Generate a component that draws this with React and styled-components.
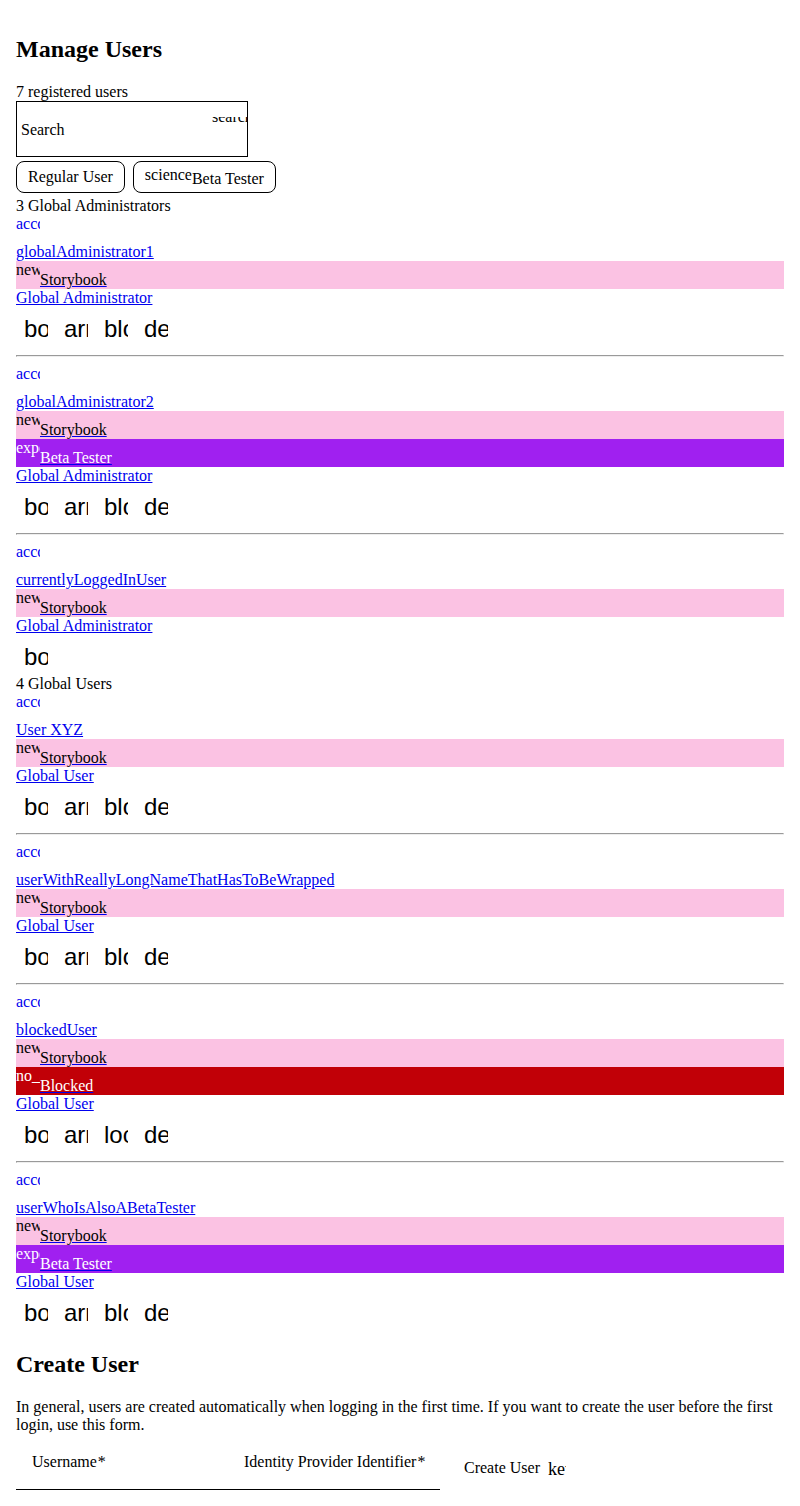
import React from "react";
import styled, { createGlobalStyle } from "styled-components";

const GlobalStyle = createGlobalStyle`
  body {
    margin: 0;
    padding: 16px;
    background: #fff;
    color: #000;
    font-family: "Liberation Serif", "Times New Roman", serif;
    font-size: 16px;
  }
`;

const Heading = styled.h2`
  margin: 20px 0;
  font-size: 24px;
  line-height: 27px;
`;

const Intro = styled.p`
  margin: 0;
`;

const SearchBox = styled.div`
  box-sizing: border-box;
  display: flex;
  width: 232px;
  max-width: 100%;
  height: 56px;
  border: 1px solid #000;
`;

const SearchInput = styled.input`
  flex: 1;
  min-width: 0;
  padding: 2px 4px 0;
  border: 0;
  outline: 0;
  background: transparent;
  color: inherit;
  font: inherit;

  &::placeholder {
    color: #000;
    opacity: 1;
  }
`;

const SearchIcon = styled.span`
  width: 35px;
  height: 24px;
  margin-top: 15px;
  overflow: hidden;
  line-height: 0;
`;

const Chips = styled.div`
  display: flex;
  flex-wrap: wrap;
  gap: 8px;
  margin: 4px 0;
`;

const Chip = styled.button`
  box-sizing: border-box;
  display: flex;
  align-items: center;
  height: 32px;
  padding: 0 11px;
  border: 1px solid #000;
  border-radius: 8px;
  background: transparent;
  color: inherit;
  font: inherit;
  cursor: pointer;
`;

const ChipIcon = styled.span`
  align-self: flex-start;
  padding-top: 4px;
`;

const ChipLabel = styled.span`
  align-self: flex-end;
  padding-bottom: 4px;
`;

const Icon = styled.span`
  display: inline-block;
  width: ${(p) => p.$size || 24}px;
  height: ${(p) => p.$size || 24}px;
  overflow: hidden;
  white-space: nowrap;
`;

const UserLink = styled.a`
  display: block;
  color: #0000ee;
  text-decoration: underline;
  overflow-wrap: anywhere;
`;

const tones = {
  storybook: { background: "#fbc2e3", color: "#000" },
  beta: { background: "#a020f0", color: "#fff" },
  blocked: { background: "#c10007", color: "#fff" },
};

const Badge = styled.div`
  background: ${(p) => tones[p.$tone].background};
  color: ${(p) => tones[p.$tone].color};
`;

const BadgeText = styled.span`
  color: inherit;
`;

const Actions = styled.div`
  display: flex;
`;

const IconButton = styled.button`
  box-sizing: border-box;
  display: flex;
  width: 40px;
  height: 40px;
  padding: 8px;
  border: 0;
  background: transparent;
  color: inherit;
  font-family: "Liberation Sans", Arial, sans-serif;
  font-size: 24px;
  text-align: left;
  cursor: pointer;
`;

const Divider = styled.hr`
  margin: 8px 0;
`;

const Form = styled.form`
  display: flex;
  align-items: flex-start;
`;

const Field = styled.label`
  box-sizing: border-box;
  display: grid;
  align-items: center;
  width: 212px;
  height: 56px;
  border-bottom: 1px solid #000;
`;

const FieldLabel = styled.span`
  grid-area: 1 / 1;
  padding-left: 16px;
  white-space: nowrap;
`;

const Star = styled.span`
  margin-left: 1px;
`;

const FieldInput = styled.input`
  grid-area: 1 / 1;
  box-sizing: border-box;
  width: 100%;
  height: 100%;
  padding: 0 16px;
  border: 0;
  outline: 0;
  background: transparent;
  font: inherit;
`;

const SubmitButton = styled.button`
  display: flex;
  align-items: center;
  gap: 8px;
  height: 36px;
  margin: 16px 8px 0;
  padding: 0 16px;
  border: 0;
  background: transparent;
  color: inherit;
  font: inherit;
  white-space: nowrap;
  cursor: pointer;
`;

const SubmitIcon = styled(Icon)`
  font-size: 18px;
  line-height: 20px;
  text-align: left;
`;

const badges = {
  storybook: { icon: "new_releases", text: "Storybook" },
  beta: { icon: "experiment", text: "Beta Tester" },
  blocked: { icon: "no_accounts", text: "Blocked" },
};

const edit = { icon: "border_color", label: "Edit" };
const demote = { icon: "arrow_downward", label: "Change role" };
const block = { icon: "block", label: "Block" };
const unblock = { icon: "lock_open", label: "Unblock" };
const remove = { icon: "delete", label: "Delete" };
const allActions = [edit, demote, block, remove];

const groups = [
  {
    title: "3 Global Administrators",
    role: "Global Administrator",
    users: [
      { name: "globalAdministrator1", badges: ["storybook"], actions: allActions },
      { name: "globalAdministrator2", badges: ["storybook", "beta"], actions: allActions },
      { name: "currentlyLoggedInUser", badges: ["storybook"], actions: [edit] },
    ],
  },
  {
    title: "4 Global Users",
    role: "Global User",
    users: [
      { name: "User XYZ", badges: ["storybook"], actions: allActions },
      { name: "userWithReallyLongNameThatHasToBeWrapped", badges: ["storybook"], actions: allActions },
      { name: "blockedUser", badges: ["storybook", "blocked"], actions: [edit, demote, unblock, remove] },
      { name: "userWhoIsAlsoABetaTester", badges: ["storybook", "beta"], actions: allActions },
    ],
  },
];

function User({ user, role }) {
  return (
    <>
      <UserLink href={`#${encodeURIComponent(user.name)}`}>
        <div>
          <Icon aria-hidden="true">account_circle</Icon>
        </div>
        <div>{user.name}</div>
        {user.badges.map((tone) => (
          <Badge key={tone} $tone={tone}>
            <Icon aria-hidden="true">{badges[tone].icon}</Icon>
            <BadgeText>{badges[tone].text}</BadgeText>
          </Badge>
        ))}
        <div>{role}</div>
      </UserLink>
      <Actions>
        {user.actions.map((action) => (
          <IconButton key={action.icon} type="button" aria-label={action.label}>
            <Icon aria-hidden="true">{action.icon}</Icon>
          </IconButton>
        ))}
      </Actions>
    </>
  );
}

function RequiredField({ label, name }) {
  return (
    <Field>
      <FieldLabel>
        {label}
        <Star>*</Star>
      </FieldLabel>
      <FieldInput type="text" name={name} required />
    </Field>
  );
}

export default function App() {
  return (
    <main>
      <GlobalStyle />
      <Heading>Manage Users</Heading>
      <div>7 registered users</div>
      <SearchBox>
        <SearchInput type="text" placeholder="Search" aria-label="Search" />
        <SearchIcon aria-hidden="true">search</SearchIcon>
      </SearchBox>
      <Chips>
        <Chip type="button">Regular User</Chip>
        <Chip type="button">
          <ChipIcon aria-hidden="true">science</ChipIcon>
          <ChipLabel>Beta Tester</ChipLabel>
        </Chip>
      </Chips>
      {groups.map((group) => (
        <section key={group.title}>
          <div>{group.title}</div>
          {group.users.map((user, index) => (
            <React.Fragment key={user.name}>
              {index > 0 && <Divider />}
              <User user={user} role={group.role} />
            </React.Fragment>
          ))}
        </section>
      ))}
      <Heading>Create User</Heading>
      <Intro>
        In general, users are created automatically when logging in the first time. If you want to
        create the user before the first login, use this form.
      </Intro>
      <Form onSubmit={(event) => event.preventDefault()}>
        <RequiredField label="Username" name="username" />
        <RequiredField label="Identity Provider Identifier" name="identifier" />
        <SubmitButton type="submit">
          Create User
          <SubmitIcon $size={18} aria-hidden="true">
            key
          </SubmitIcon>
        </SubmitButton>
      </Form>
    </main>
  );
}
